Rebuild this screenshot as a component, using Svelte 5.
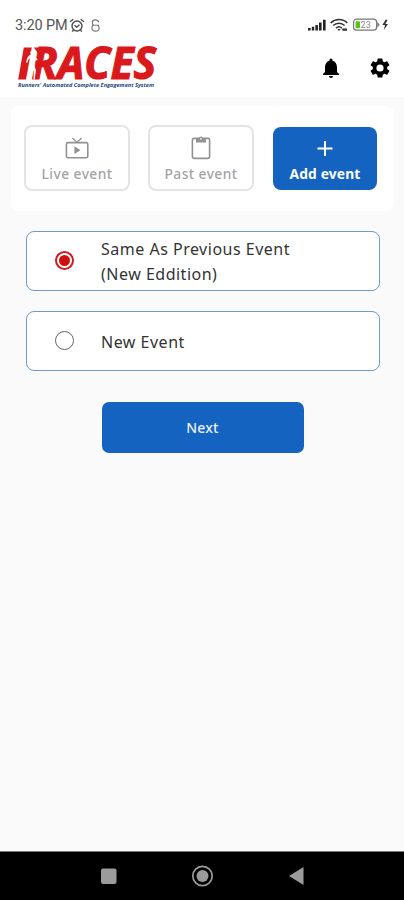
<script lang="ts">
  type Tab = {
    id: string;
    label: string;
  };

  const tabs: Tab[] = [
    { id: 'live', label: 'Live event' },
    { id: 'past', label: 'Past event' },
    { id: 'add', label: 'Add event' },
  ];

  const options: string[][] = [['Same As Previous Event', '(New Eddition)'], ['New Event']];

  let activeTab = $state('add');
  let selected = $state(0);
</script>

<div class="screen">
  <div class="status-bar">
    <span class="time">3:20 PM</span>
    <svg class="alarm" width="16" height="15" viewBox="0 0 16 15" fill="none" stroke="#4c4c4c" stroke-width="1.4">
      <circle cx="8" cy="8" r="5" />
      <path d="M1 3.8 4.3 1.2M11.7 1.2 15 3.8M5.5 7.3 7.8 9.2 10.5 6.8M4.5 12 3.2 13.6M11.5 12l1.3 1.6" />
    </svg>
    <svg class="mini" width="9" height="13" viewBox="0 0 9 13" fill="none" stroke="#777" stroke-width="1.1">
      <path d="M7.7 3.2C7.2 1.5 5.9.9 4.5.9 2.5.9 1.3 2 1.3 3.5c0 1.1.4 1.9 1.2 2.4M1 6.3h7M2 6.5C1.2 7 .9 7.9.9 8.9c0 2 1.5 3.2 3.6 3.2s3.6-1.2 3.6-3.2c0-1-.4-1.9-1.2-2.4" />
    </svg>
    <span class="grow"></span>
    <svg width="82" height="14" viewBox="0 0 82 14">
      <path fill="#222" d="M0 10.1h2.6v2.4H0zM3.8 8.7h2.4v3.8H3.8zM7.4 6.9h2.5v5.6H7.4zM11 4.5h2.6v8H11zM15 1.8h2.6v10.7H15z" />
      <g fill="none" stroke="#333" stroke-width="1.5">
        <path d="M22.7 4.9c4.8-4.5 12-4.5 16.6 0M25.2 7.5c3.3-3.1 8.2-3.1 11.4 0M28 10.1c1.8-1.6 4.1-1.6 5.9 0" />
      </g>
      <path fill="#333" d="M29.3 11.1h3.4L31 13.1zM34.3 10.4h4.7v2.3h-4.7z" />
      <rect x="45.6" y="1.2" width="23" height="11" rx="3" fill="#fff" stroke="#777" stroke-width="1.2" />
      <path fill="#777" d="M69.3 3.7 71.7 6.7 69.3 9.7z" />
      <rect x="47.6" y="3.2" width="4.4" height="7" rx="1" fill="#54c516" />
      <text x="52.6" y="9.9" font-size="9" fill="#888" class="battery">23</text>
      <path fill="#333" d="M77.7 1.6 74.4 7.1h2.6l-1.2 5 4.2-6h-2.7l2.2-4.2z" />
    </svg>
  </div>

  <header>
    <svg class="logo" width="142" height="45" viewBox="0 0 142 45">
      <path fill="#d9191c" d="M5.8 1.5h8L8 33.4H.2z" />
      <text class="brand" x="13.6" y="33.4" textLength="124.5" lengthAdjust="spacingAndGlyphs">RACES</text>
      <path fill="#d9191c" d="M15.8 1.5H24l-2.6 8.2-2-3.5z" />
      <g fill="#fff">
        <circle cx="14.4" cy="6.6" r="2.1" />
        <path d="M11.3 9.3 15 8.5l2.6 2.4 2 2.6-.7 1-2.6-1.6.2 6.6 1.4 4.8-1.2 9.4h-1.2l.3-8.8-2.6-4.3-1.6 5.4-1.3 8.2H9l1.2-9.6 1.8-6.6.3-6-1.8 1.4-1.4 3.6-1-.5 1.1-4.4z" />
      </g>
      <text class="tagline" x="0" y="40.6" textLength="136" lengthAdjust="spacingAndGlyphs">Runners' Automated Complete Engagement System</text>
    </svg>
    <span class="grow"></span>
    <button class="icon-button" aria-label="Notifications">
      <svg width="24" height="24" viewBox="0 0 24 24">
        <path d="M12 22c1.1 0 2-.9 2-2h-4c0 1.1.9 2 2 2zm6-6v-5c0-3.07-1.63-5.64-4.5-6.32V4a1.5 1.5 0 0 0-3 0v.68C7.64 5.36 6 7.92 6 11v5l-2 2v1h16v-1z" />
      </svg>
    </button>
    <button class="icon-button" aria-label="Settings">
      <svg width="24" height="24" viewBox="0 0 24 24">
        <path d="M19.14 12.94c.04-.3.06-.61.06-.94s-.02-.64-.07-.94l2.03-1.58a.49.49 0 0 0 .12-.61l-1.92-3.32a.49.49 0 0 0-.59-.22l-2.39.96a7 7 0 0 0-1.62-.94l-.36-2.54a.48.48 0 0 0-.48-.41h-3.84a.47.47 0 0 0-.47.41l-.36 2.54c-.59.24-1.13.57-1.62.94l-2.39-.96a.48.48 0 0 0-.59.22L2.74 8.87a.47.47 0 0 0 .12.61l2.03 1.58a7 7 0 0 0 0 1.88l-2.03 1.58a.49.49 0 0 0-.12.61l1.92 3.32c.12.22.37.29.59.22l2.39-.96c.5.38 1.03.7 1.62.94l.36 2.54c.05.24.24.41.48.41h3.84c.24 0 .44-.17.47-.41l.36-2.54a7 7 0 0 0 1.62-.94l2.39.96c.22.08.47 0 .59-.22l1.92-3.32a.47.47 0 0 0-.12-.61zM12 15.6a3.6 3.6 0 1 1 0-7.2 3.6 3.6 0 0 1 0 7.2z" />
      </svg>
    </button>
  </header>

  <main>
    <div class="tabs">
      {#each tabs as tab}
        <button class="tab" class:active={activeTab === tab.id} onclick={() => (activeTab = tab.id)}>
          <svg width="26" height="26" viewBox="0 0 26 26" fill="none" stroke="currentColor">
            {#if tab.id === 'live'}
              <rect x="2.4" y="7.6" width="21.4" height="15.2" rx="1.6" stroke-width="1.6" />
              <path d="M8.3 3 13 7.2 17.7 3" stroke-width="1.3" />
              <path d="M10.4 11.3v7.8l6.2-3.9z" fill="currentColor" stroke="none" />
            {:else if tab.id === 'past'}
              <rect x="4.4" y="3.4" width="17.2" height="20" rx="1.8" stroke-width="1.6" />
              <path d="M8 3.2h2.8a2.3 2.3 0 0 1 4.4 0H18v4.4H8z" fill="currentColor" stroke="none" />
              <circle cx="13" cy="3.8" r=".9" fill="#fff" stroke="none" />
            {:else}
              <path d="M13 6v15M5.5 13.5h15" stroke-width="2" />
            {/if}
          </svg>
          <span>{tab.label}</span>
        </button>
      {/each}
    </div>

    <div class="options">
      {#each options as lines, i}
        <button class="option" onclick={() => (selected = i)}>
          <span class="radio" class:checked={selected === i}></span>
          <span class="option-label">
            {#each lines as line}
              <span>{line}</span>
            {/each}
          </span>
        </button>
      {/each}
    </div>

    <button class="next">Next</button>
  </main>

  <nav>
    <svg width="202" height="24" viewBox="0 0 202 24" fill="#9b9b9b">
      <rect x="0" y="4.5" width="15.5" height="15.5" rx="2" />
      <circle cx="101.5" cy="12" r="6" />
      <circle cx="101.5" cy="12" r="9.7" fill="none" stroke="#9b9b9b" stroke-width="1.7" />
      <path d="M188 12 202.5 3v18z" />
    </svg>
  </nav>
</div>

<style>
  :global(body) {
    margin: 0;
  }

  .screen {
    display: flex;
    flex-direction: column;
    width: 404px;
    height: 900px;
    background: #fafafa;
    font-family: 'Noto Sans', 'Open Sans', sans-serif;
    overflow: hidden;
  }

  button {
    margin: 0;
    padding: 0;
    border: none;
    background: none;
    font-family: inherit;
    cursor: pointer;
  }

  .grow {
    flex: 1;
  }

  .status-bar {
    display: flex;
    align-items: center;
    box-sizing: border-box;
    height: 40px;
    padding: 10px 14px 0 15px;
    background: #fff;
  }

  .time {
    font-family: Roboto, sans-serif;
    font-size: 14.5px;
    letter-spacing: -0.1px;
    color: #555;
  }

  .alarm {
    margin-left: 1px;
  }

  .mini {
    margin-left: 6px;
  }

  .battery {
    font-family: Roboto, sans-serif;
  }

  header {
    display: flex;
    align-items: center;
    box-sizing: border-box;
    height: 57px;
    padding: 0 12px 0 18px;
    background: #fff;
  }

  .logo {
    overflow: visible;
  }

  .brand {
    font-family: 'Open Sans', 'Noto Sans', sans-serif;
    font-size: 44px;
    font-weight: 700;
    font-style: italic;
    fill: #d9191c;
    stroke: #d9191c;
    stroke-width: 1.2px;
  }

  .tagline {
    font-family: 'Open Sans', sans-serif;
    font-size: 5.8px;
    font-weight: 700;
    font-style: italic;
    fill: #23477e;
  }

  .icon-button {
    display: flex;
    margin: 0 0 2px 25.5px;
  }

  main {
    display: flex;
    flex: 1;
    flex-direction: column;
    align-items: center;
    padding: 9px 0 0 1px;
  }

  .tabs {
    display: flex;
    gap: 18px;
    box-sizing: border-box;
    width: 383px;
    height: 105px;
    padding: 19px 0 0 13px;
    border-radius: 8px;
    background: #fff;
  }

  .tab {
    display: flex;
    flex-direction: column;
    align-items: center;
    box-sizing: border-box;
    width: 106px;
    height: 66px;
    padding-top: 8px;
    border: 2px solid #e4e4e4;
    border-radius: 8px;
    color: #929292;
    font-size: 13.8px;
    font-weight: 500;
    letter-spacing: 0.45px;
  }

  .tab span {
    line-height: 20px;
    margin-top: 3px;
    color: #a4a4a4;
  }

  .tab.active {
    width: 104px;
    height: 63px;
    margin: 2px 0 0 1px;
    padding-top: 8px;
    border: none;
    background: #1463c0;
    color: #fff;
    font-weight: 700;
    letter-spacing: 0.15px;
  }

  .tab.active span {
    color: #fff;
  }

  .options {
    display: flex;
    flex-direction: column;
    gap: 20px;
    margin-top: 20px;
  }

  .option {
    display: flex;
    align-items: center;
    box-sizing: border-box;
    width: 354px;
    height: 60px;
    padding-left: 28px;
    border: 1px solid #6c9dca;
    border-radius: 8px;
    background: #fff;
    text-align: left;
  }

  .radio {
    display: flex;
    align-items: center;
    justify-content: center;
    box-sizing: border-box;
    width: 19px;
    height: 19px;
    margin-bottom: 1px;
    border: 1.6px solid #666;
    border-radius: 50%;
  }

  .radio.checked {
    border: 2px solid #cf1b1b;
  }

  .radio.checked::before {
    content: '';
    width: 11px;
    height: 11px;
    border-radius: 50%;
    background: #cf1010;
  }

  .option-label {
    display: flex;
    flex-direction: column;
    margin: 2px 0 0 27.5px;
    color: #333;
    font-size: 16px;
    line-height: 25px;
    letter-spacing: 0.5px;
  }

  .next {
    width: 202px;
    height: 51px;
    margin-top: 31px;
    border-radius: 7px;
    background: #1463c0;
    color: #e8f1fb;
    font-size: 14px;
    font-weight: 500;
    letter-spacing: 0.2px;
  }

  nav {
    display: flex;
    align-items: center;
    justify-content: center;
    box-sizing: border-box;
    height: 49px;
    border-top: 1px solid #777;
    background: #000;
  }

  nav svg {
    overflow: visible;
  }
</style>
